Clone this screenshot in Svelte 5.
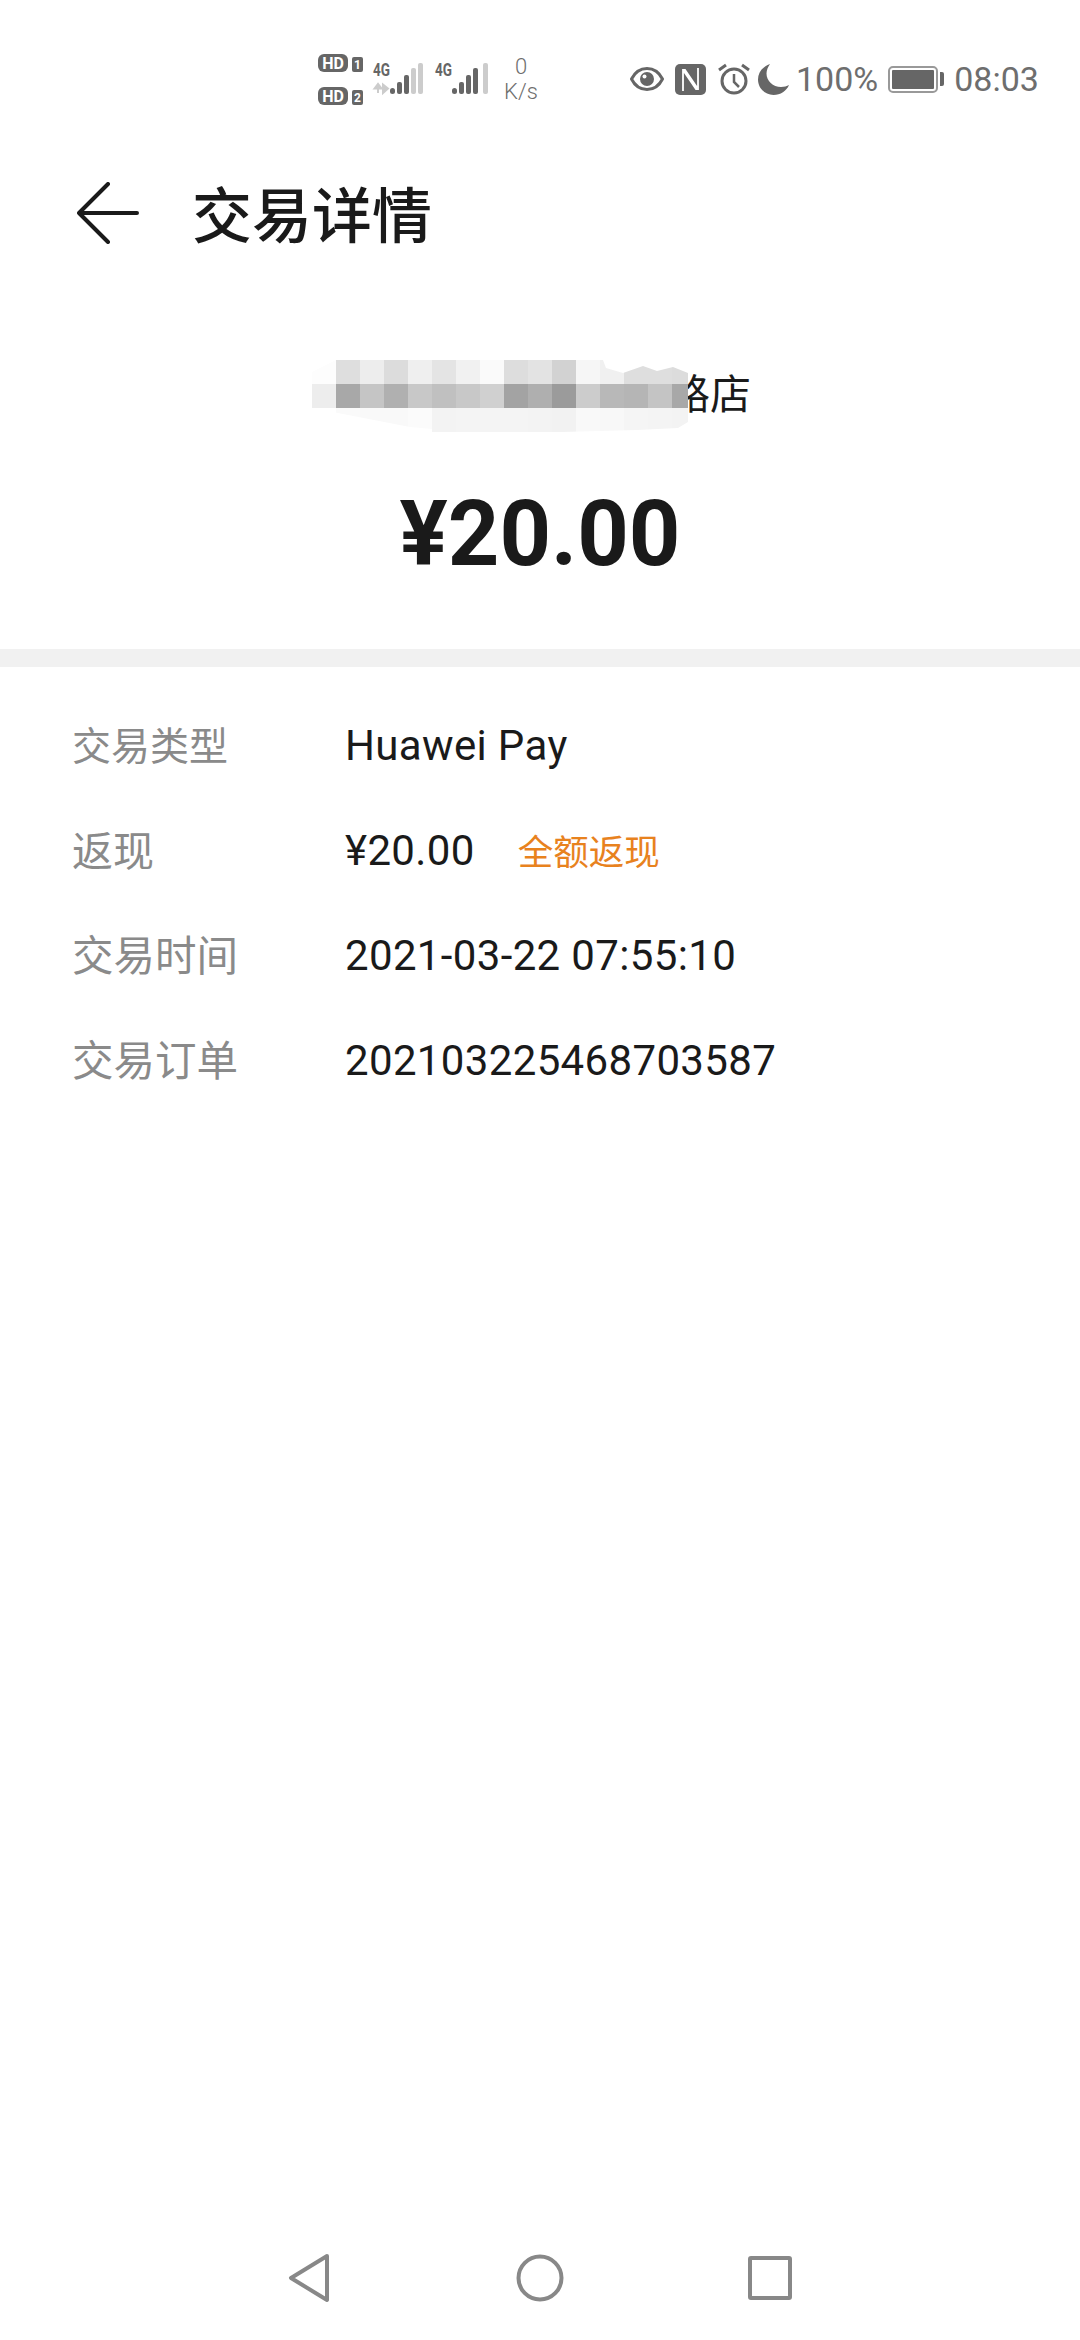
<script>
	const rows = [
		{ k: '交易类型', size: 39, v: 'Huawei Pay' },
		{ k: '返现', size: 41, v: '¥20.00', tag: '全额返现' },
		{ k: '交易时间', size: 41.5, v: '2021-03-22 07:55:10' },
		{ k: '交易订单', size: 41.5, v: '202103225468703587' }
	];

	// redacted merchant name, one hex per 24px cell
	const mosaic = [
		['fdfdfd', 'dedede', 'ededed', 'dcdcdc', 'efefef', 'e4e4e4', 'f1f1f1', 'fafafa', 'dddddd', 'e3e3e3', 'd2d2d2', 'f6f6f6', 'f0f0f0', 'dedede', 'dedede', 'dcdcdc'],
		['ededed', 'a8a8a8', 'c5c5c5', 'b0b0b0', 'c8c8c8', 'c0c0c0', 'c8c8c8', 'd0d0d0', 'a3a3a3', 'afafaf', '9b9b9b', 'cccccc', 'b8b8b8', 'b5b5b5', 'c4c4c4', 'a8a8a8'],
		['ffffff', 'fafafa', 'f9f9f9', 'f9f9f9', 'fbfbfb', 'f3f3f3', 'f4f4f4', 'f4f4f4', 'f4f4f4', 'f3f3f3', 'f2f2f2', 'f9f9f9', 'f8f8f8', 'f5f5f5', 'f4f4f4', 'f3f3f3']
	];
</script>

<div class="page">
	<div class="status">
		<div class="hd">
			<svg width="46" height="18" viewBox="0 0 46 18">
				<rect width="30" height="18" rx="6" fill="#666" />
				<text x="15" y="14.500" class="hd-t">HD</text>
				<rect x="34" y="3" width="11" height="15" rx="2" fill="#666" />
				<text x="39.500" y="15" class="hd-n">1</text>
			</svg>
			<svg width="46" height="18" viewBox="0 0 46 18">
				<rect width="30" height="18" rx="6" fill="#666" />
				<text x="15" y="14.500" class="hd-t">HD</text>
				<rect x="34" y="3" width="11" height="15" rx="2" fill="#666" />
				<text x="39.500" y="15" class="hd-n">2</text>
			</svg>
		</div>
		<svg class="sig" width="50" height="32" viewBox="0 0 50 32">
			<text x="0" y="13" class="g4" textLength="17" lengthAdjust="spacingAndGlyphs">4G</text>
			<path d="M5 30v-7M1.500 25.500L5 21l3.500 4.500zM10 21v7M10 30l5-4.500-5-4z" fill="#ccc" stroke="#ccc" stroke-width="2" />
			<rect x="17" y="25" width="5" height="6" rx="2.500" fill="#666" />
			<rect x="24" y="19" width="5" height="12" rx="2" fill="#666" />
			<rect x="31" y="12" width="5" height="19" rx="2" fill="#666" />
			<rect x="38" y="5" width="5" height="26" rx="2" fill="#ccc" />
			<rect x="45" y="0" width="5" height="31" rx="2" fill="#ccc" />
		</svg>
		<svg class="sig two" width="53" height="32" viewBox="0 0 53 32">
			<text x="0" y="13" class="g4" textLength="17" lengthAdjust="spacingAndGlyphs">4G</text>
			<rect x="17" y="25" width="5" height="6" rx="2.500" fill="#666" />
			<rect x="24" y="19" width="5" height="12" rx="2" fill="#666" />
			<rect x="31" y="12" width="5" height="19" rx="2" fill="#666" />
			<rect x="38" y="5" width="5" height="26" rx="2" fill="#666" />
			<rect x="48" y="0" width="5" height="31" rx="2" fill="#ccc" />
		</svg>
		<div class="speed"><span>0</span><span>K/s</span></div>

		<svg class="eye" width="34" height="26" viewBox="0 0 34 26" fill="none">
			<path d="M1.500 13C5 6 10.500 2.500 17 2.500S29 6 32.500 13C29 20 23.500 23.500 17 23.500S5 20 1.500 13z" stroke="#666" stroke-width="3" />
			<circle cx="17" cy="13" r="7" fill="#666" />
			<circle cx="14.500" cy="10.500" r="2" fill="#fff" />
		</svg>
		<svg class="nfc" width="31" height="31" viewBox="0 0 31 31" fill="none">
			<rect width="31" height="31" rx="5" fill="#666" />
			<path d="M8 27V6h2l13 19M23 4v21h-2L8 6" stroke="#fff" stroke-width="1.800" />
		</svg>
		<svg class="alarm" width="32" height="32" viewBox="0 0 32 32" fill="none" stroke="#666">
			<circle cx="16" cy="18" r="12" stroke-width="3" />
			<path d="M16 11v8l5 5" stroke-width="2.500" />
			<path d="M1 7l7-5M31 7l-7-5" stroke-width="3" />
		</svg>
		<svg class="moon" width="31" height="31" viewBox="0 0 31 31">
			<path d="M12 0C4 3 0 9 0 15.500 0 24 7 31 15.500 31 22.500 31 28.500 27 31 21 29 22 26 23 23 23 15 23 8.500 17 8.500 9.500 8.500 6 10 3 12 0z" fill="#666" />
		</svg>
		<span class="pct">100%</span>
		<div class="batt"><div class="fill"></div></div>
		<div class="nub"></div>
		<span class="clock">08:03</span>
	</div>

	<div class="bar">
		<svg width="62" height="62" viewBox="0 0 62 62" fill="none" stroke="#1a1a1a" stroke-width="4" stroke-linecap="round" stroke-linejoin="round">
			<path d="M31 2L2 31l29 29M2 31h58" />
		</svg>
		<h1>交易详情</h1>
	</div>

	<div class="head">
		<div class="merchant">
			<span>路店</span>
			<div class="mask">
				{#each mosaic as row}
					{#each row as c}
						<i style="background:#{c}"></i>
					{/each}
				{/each}
			</div>
		</div>
		<div class="amount">¥20.00</div>
	</div>

	<div class="rule"></div>

	<div class="list">
		{#each rows as r}
			<div class="row">
				<span class="k" style="font-size:{r.size}px">{r.k}</span>
				<span class="v">{r.v}</span>
				{#if r.tag}<span class="tag">{r.tag}</span>{/if}
			</div>
		{/each}
	</div>

	<div class="nav">
		<svg width="44" height="50" viewBox="0 0 44 50" fill="none" stroke="#888" stroke-width="4" stroke-linejoin="round">
			<path d="M39 3L3 25l36 22z" />
		</svg>
		<svg width="50" height="50" viewBox="0 0 50 50" fill="none" stroke="#888" stroke-width="4">
			<circle cx="25" cy="25" r="21.500" />
		</svg>
		<svg width="44" height="44" viewBox="0 0 44 44" fill="none" stroke="#888" stroke-width="4" stroke-linejoin="round">
			<rect x="2" y="2" width="40" height="40" rx="1" />
		</svg>
	</div>
</div>

<style>
	:global(body) { margin: 0; background: #fff; }
	.page { height: 2340px; display: flex; flex-direction: column; font-family: Roboto, "Noto Sans CJK SC", sans-serif; color: #1a1a1a; overflow: hidden; }

	.status { height: 158px; flex: none; display: flex; align-items: center; padding-left: 318px; box-sizing: border-box; color: #6e6e6e; }
	.status > * { flex: none; }
	.hd { display: flex; flex-direction: column; gap: 15px; margin-right: 9px; }
	.hd svg { display: block; }
	.hd-t { font: 700 16px Roboto, sans-serif; fill: #fff; text-anchor: middle; }
	.hd-n { font: 700 12px Roboto, sans-serif; fill: #fff; text-anchor: middle; }
	.sig { overflow: visible; }
	.g4 { font: 700 18px Roboto, sans-serif; fill: #666; }
	.sig.two { margin-left: 12px; }
	.speed { display: flex; flex-direction: column; align-items: center; width: 36px; margin-left: 15px; font-size: 22px; line-height: 25px; font-weight: 300; }
	.eye { margin-left: 91px; }
	.nfc { margin-left: 11px; }
	.alarm { margin-left: 12px; }
	.moon { margin-left: 8px; }
	.pct { font-size: 34px; margin-left: 7px; }
	.batt { width: 50px; height: 27px; box-sizing: border-box; border: 2px solid #999; border-radius: 5px; padding: 2px; margin-left: 10px; }
	.fill { height: 100%; background: #666; border-radius: 1px; }
	.nub { width: 4px; height: 14px; background: #666; border-radius: 0 2px 2px 0; margin-left: 2px; }
	.clock { font-size: 34px; margin-left: 10px; }

	.bar { height: 110px; flex: none; display: flex; align-items: center; padding-left: 77px; }
	.bar svg { flex: none; }
	h1 { margin: 0 0 4px 53px; font-size: 60px; font-weight: 500; }

	.head { height: 381px; flex: none; box-sizing: border-box; padding-top: 92px; }
	.merchant { position: relative; height: 66px; display: flex; justify-content: flex-end; align-items: center; padding-right: 329px; font-size: 41px; }
	.merchant span { margin-bottom: 4px; }
	.mask { position: absolute; left: 312px; top: 0; width: 384px; height: 72px; display: grid; grid-template-columns: repeat(16, 24px); grid-auto-rows: 24px; clip-path: polygon(0 12px, 24px 0, 291px 0, 294px 8px, 311px 13px, 331px 6px, 345px 11px, 361px 7px, 376px 13px, 376px 62px, 366px 68px, 325px 70px, 250px 72px, 120px 72px, 120px 69px, 98px 67px, 0 48px); }
	.mask i { display: block; }
	.amount { margin-top: 56px; text-align: center; font-size: 90px; line-height: 106px; font-weight: 700; }

	.rule { height: 18px; flex: none; background: #f1f1f1; }

	.list { padding-top: 25px; }
	.row { height: 105px; display: flex; align-items: center; padding-left: 72px; font-size: 42px; }
	.k { width: 273px; flex: none; margin-bottom: 3px; color: #8a8a8a; font-weight: 400; }
	.v { letter-spacing: 0.35px; margin-top: 1px; }
	.tag { margin-left: 43px; font-size: 35.500px; color: #e8821e; }

	.nav { margin-top: auto; height: 124px; flex: none; display: flex; justify-content: center; align-items: center; gap: 183px; }
</style>
